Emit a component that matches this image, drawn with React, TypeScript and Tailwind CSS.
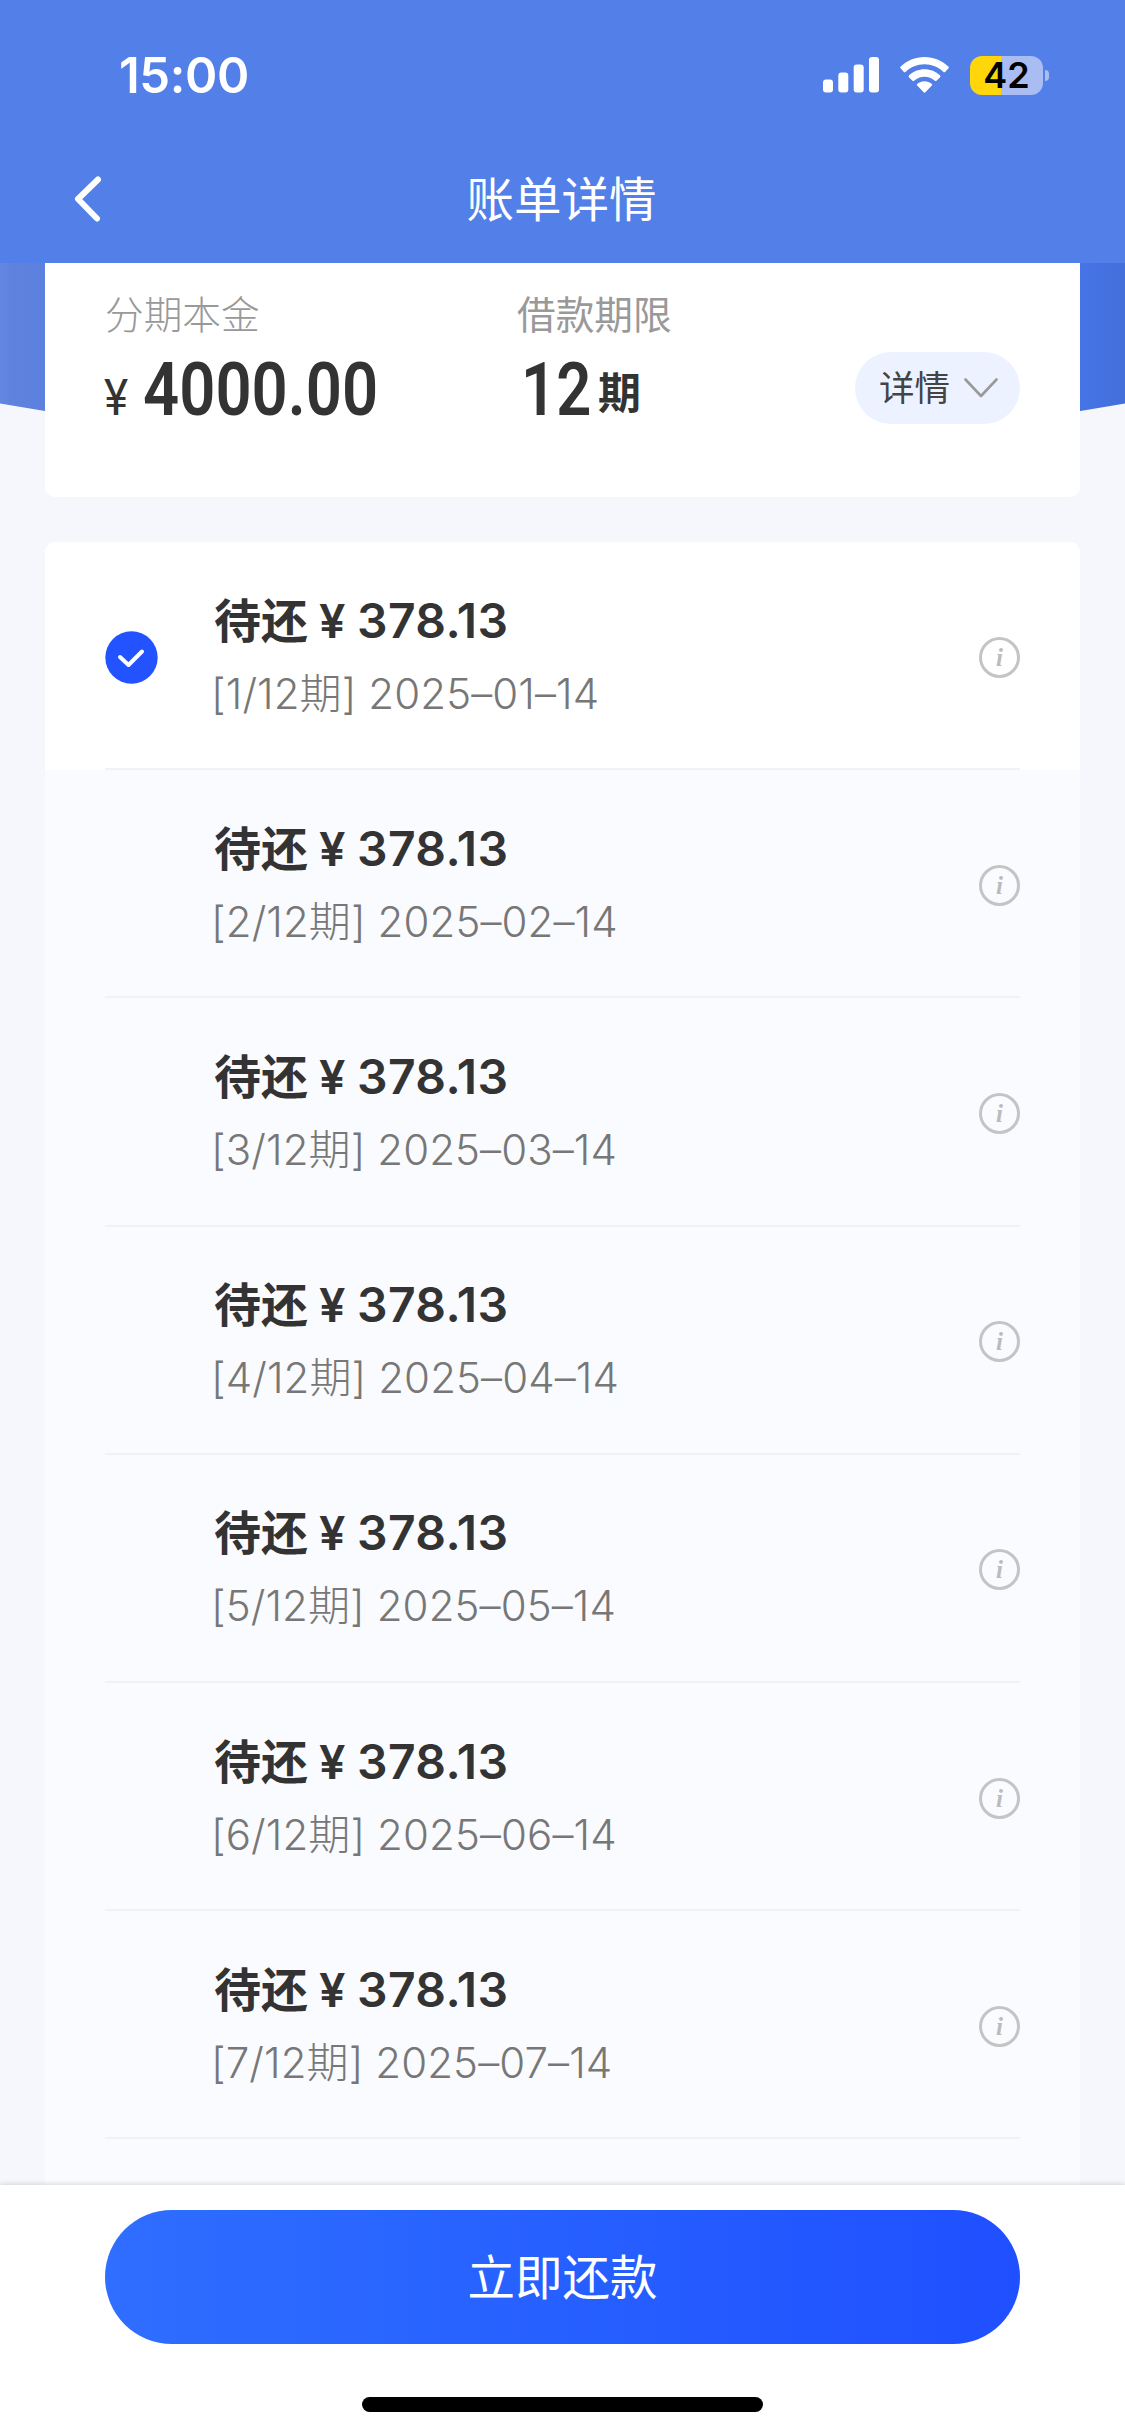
import { clsx } from 'clsx'

const installments = [
  { period: 1, date: '2025–01–14' },
  { period: 2, date: '2025–02–14' },
  { period: 3, date: '2025–03–14' },
  { period: 4, date: '2025–04–14' },
  { period: 5, date: '2025–05–14' },
  { period: 6, date: '2025–06–14' },
  { period: 7, date: '2025–07–14' },
]

function StatusBar() {
  return (
    <div className="flex h-[150px] items-center pl-[119px] pr-[76px]">
      <span className="pt-px text-[49px] leading-[60px] font-semibold tracking-[-0.4px]">
        15:00
      </span>
      <div className="ml-auto flex items-center">
        <svg width="56" height="36" viewBox="0 0 56 36" fill="currentColor">
          <rect x="0" y="22.5" width="10" height="13" rx="3" />
          <rect x="15.3" y="15.5" width="10" height="20" rx="3" />
          <rect x="30.7" y="7.5" width="10" height="28" rx="3" />
          <rect x="46" y="0" width="10" height="35.5" rx="3" />
        </svg>
        <svg
          className="ml-[21px]"
          width="49"
          height="36"
          viewBox="0 0 49 36"
          fill="currentColor"
        >
          <path d="M24.5 0C15.2 0 6.9 3.6.7 9.5a1.5 1.5 0 0 0 0 2.1l3 3.1a1.5 1.5 0 0 0 2.1 0C10.7 10.2 17.3 7.3 24.5 7.3s13.8 2.9 18.7 7.4a1.5 1.5 0 0 0 2.1 0l3-3.1a1.5 1.5 0 0 0 0-2.1C42.1 3.6 33.8 0 24.5 0z" />
          <path d="M24.5 12.2c-6 0-11.4 2.3-15.4 6a1.5 1.5 0 0 0 0 2.2l3.2 3.2a1.5 1.5 0 0 0 2.1 0c2.7-2.4 6.2-3.9 10.1-3.9s7.4 1.5 10.1 3.9a1.5 1.5 0 0 0 2.1 0l3.2-3.2a1.5 1.5 0 0 0 0-2.2c-4-3.7-9.4-6-15.4-6z" />
          <path d="M24.5 24.3c-2.7 0-5.1.9-7.1 2.5a1.3 1.3 0 0 0 0 2l6 6.3a1.5 1.5 0 0 0 2.2 0l6-6.3a1.3 1.3 0 0 0 0-2c-2-1.6-4.4-2.5-7.1-2.5z" />
        </svg>
        <div className="ml-[21px] flex h-[39px] w-[73px] items-center justify-center rounded-[12px] bg-linear-to-r from-[#ffd60a] from-43% to-[#a9bdf3] to-43% text-[36px] leading-[39px] font-semibold text-black">
          42
        </div>
        <div className="ml-[2px] h-[11px] w-[4px] rounded-r-full bg-[#a9bdf3]" />
      </div>
    </div>
  )
}

function Summary() {
  return (
    <section className="relative mx-[45px] flex h-[234px] rounded-b-[10px] bg-white pl-[59px] pr-[60px] text-[#333]">
      <div className="w-[412px] pt-[22px]">
        <p className="pl-px text-[38.7px] leading-[60px] font-light text-[#999]">
          分期本金
        </p>
        <div className="flex items-baseline font-[Roboto] leading-[88px]">
          <span className="w-[39px] text-[50px]">
            <span className="inline-block origin-left scale-x-[0.92]">¥</span>
          </span>
          <span className="origin-left scale-x-[0.845] text-[75px] font-semibold">
            4000.00
          </span>
        </div>
      </div>
      <div className="w-[240px] pt-[22px]">
        <p className="pl-px text-[38.7px] leading-[60px] text-[#999]">
          借款期限
        </p>
        <div className="flex">
          <span className="ml-[5px] w-[77px] origin-left scale-x-[0.82] font-[Roboto] text-[75px] leading-[88px] font-semibold">
            12
          </span>
          <span className="pt-[8px] text-[43px] leading-[80px] font-bold">
            期
          </span>
        </div>
      </div>
      <button className="mt-[89px] ml-auto flex h-[72px] w-[165px] items-center rounded-full bg-[#ecf2ff] pl-[24px] text-[35.5px] text-[#444]">
        <span className="pt-[2px]">详情</span>
        <svg
          className="ml-[14px]"
          width="34"
          height="20"
          viewBox="0 0 34 20"
          fill="none"
          stroke="#999"
          strokeWidth="2.6"
          strokeLinecap="round"
          strokeLinejoin="round"
        >
          <path d="M1.5 1.5 17 18 32.5 1.5" />
        </svg>
      </button>
    </section>
  )
}

function InfoIcon() {
  return (
    <div className="flex h-[41px] w-[41px] items-center justify-center rounded-full border-[3px] border-[#c4c4c4] font-['Liberation_Serif'] text-[25px] leading-none font-bold text-[#bbb] italic">
      i
    </div>
  )
}

export default function App() {
  return (
    <main className="flex h-[2435px] w-[1125px] flex-col overflow-hidden bg-[#f5f7fc] font-[Inter,'Noto_Sans_CJK_SC',sans-serif]">
      <header className="h-[263px] shrink-0 bg-[#527fe8] text-white">
        <StatusBar />
        <div className="flex h-[98px] items-center px-[74px]">
          <svg
            width="28"
            height="46"
            viewBox="0 0 28 46"
            fill="none"
            stroke="currentColor"
            strokeWidth="6"
            strokeLinecap="round"
            strokeLinejoin="round"
          >
            <path d="M24 3.5 4 23 23 42.5" />
          </svg>
          <h1 className="flex-1 pt-[2px] pr-[30px] text-center text-[47.5px]">
            账单详情
          </h1>
        </div>
      </header>

      <div className="relative flex-1 overflow-hidden">
        <svg
          className="absolute top-0 left-0"
          width="1125"
          height="200"
          viewBox="0 0 1125 200"
        >
          <defs>
            <linearGradient id="hero" x1="0" x2="1" y1="0" y2="0">
              <stop offset="0" stopColor="#6388e4" />
              <stop offset="0.01" stopColor="#5f82dc" />
              <stop offset="0.04" stopColor="#5b80de" />
              <stop offset="0.96" stopColor="#4674e6" />
              <stop offset="1" stopColor="#436fdb" />
            </linearGradient>
          </defs>
          <path d="M0 0H1125V140.5Q562 240 0 140.5Z" fill="url(#hero)" />
        </svg>

        <Summary />

        <ul className="relative mx-[45px] mt-[45px] overflow-hidden rounded-t-[10px] bg-[#fafbfe]">
          {installments.map((item) => (
            <li
              key={item.period}
              className={clsx(
                'h-[228.2px] px-[60px]',
                item.period === 1 && 'bg-white',
              )}
            >
              <div className="flex h-full items-center border-b-2 border-[#f1f2f5] pt-[4px]">
                <div className="w-[108px]">
                  {item.period === 1 && (
                    <svg width="53" height="53" viewBox="0 0 53 53" fill="none">
                      <circle cx="26.5" cy="26.5" r="26.2" fill="#2253ff" />
                      <path
                        d="M15 26 23.5 34 37 20.5"
                        stroke="#fff"
                        strokeWidth="4"
                        strokeLinecap="round"
                        strokeLinejoin="round"
                      />
                    </svg>
                  )}
                </div>
                <div>
                  <p className="flex pl-px text-[47px] leading-[60px] font-semibold text-[#333]">
                    <span className="w-[105px] font-bold">待还</span>
                    <span className="w-[38px]">¥</span>
                    <span className="text-[48px] tracking-[0.4px]">378.13</span>
                  </p>
                  <p className="-ml-[2px] mt-[13px] text-[42px] leading-[60px] font-light tracking-[0.1px] whitespace-nowrap text-[#777]">
                    [{item.period}/12期] {item.date}
                  </p>
                </div>
                <div className="ml-auto">
                  <InfoIcon />
                </div>
              </div>
            </li>
          ))}
          <li className="h-[228px]" />
        </ul>
      </div>

      <footer className="relative flex h-[250px] shrink-0 flex-col items-center bg-white pt-[25px] shadow-[0_-1px_5px_rgba(0,0,0,0.14)]">
        <button className="h-[134px] w-[915px] rounded-full bg-linear-to-r from-[#2f6eff] to-[#204fff] pt-[2px] text-[47.5px] text-white">
          立即还款
        </button>
        <div className="mt-[53px] h-[15px] w-[401px] rounded-full bg-black" />
      </footer>
    </main>
  )
}
